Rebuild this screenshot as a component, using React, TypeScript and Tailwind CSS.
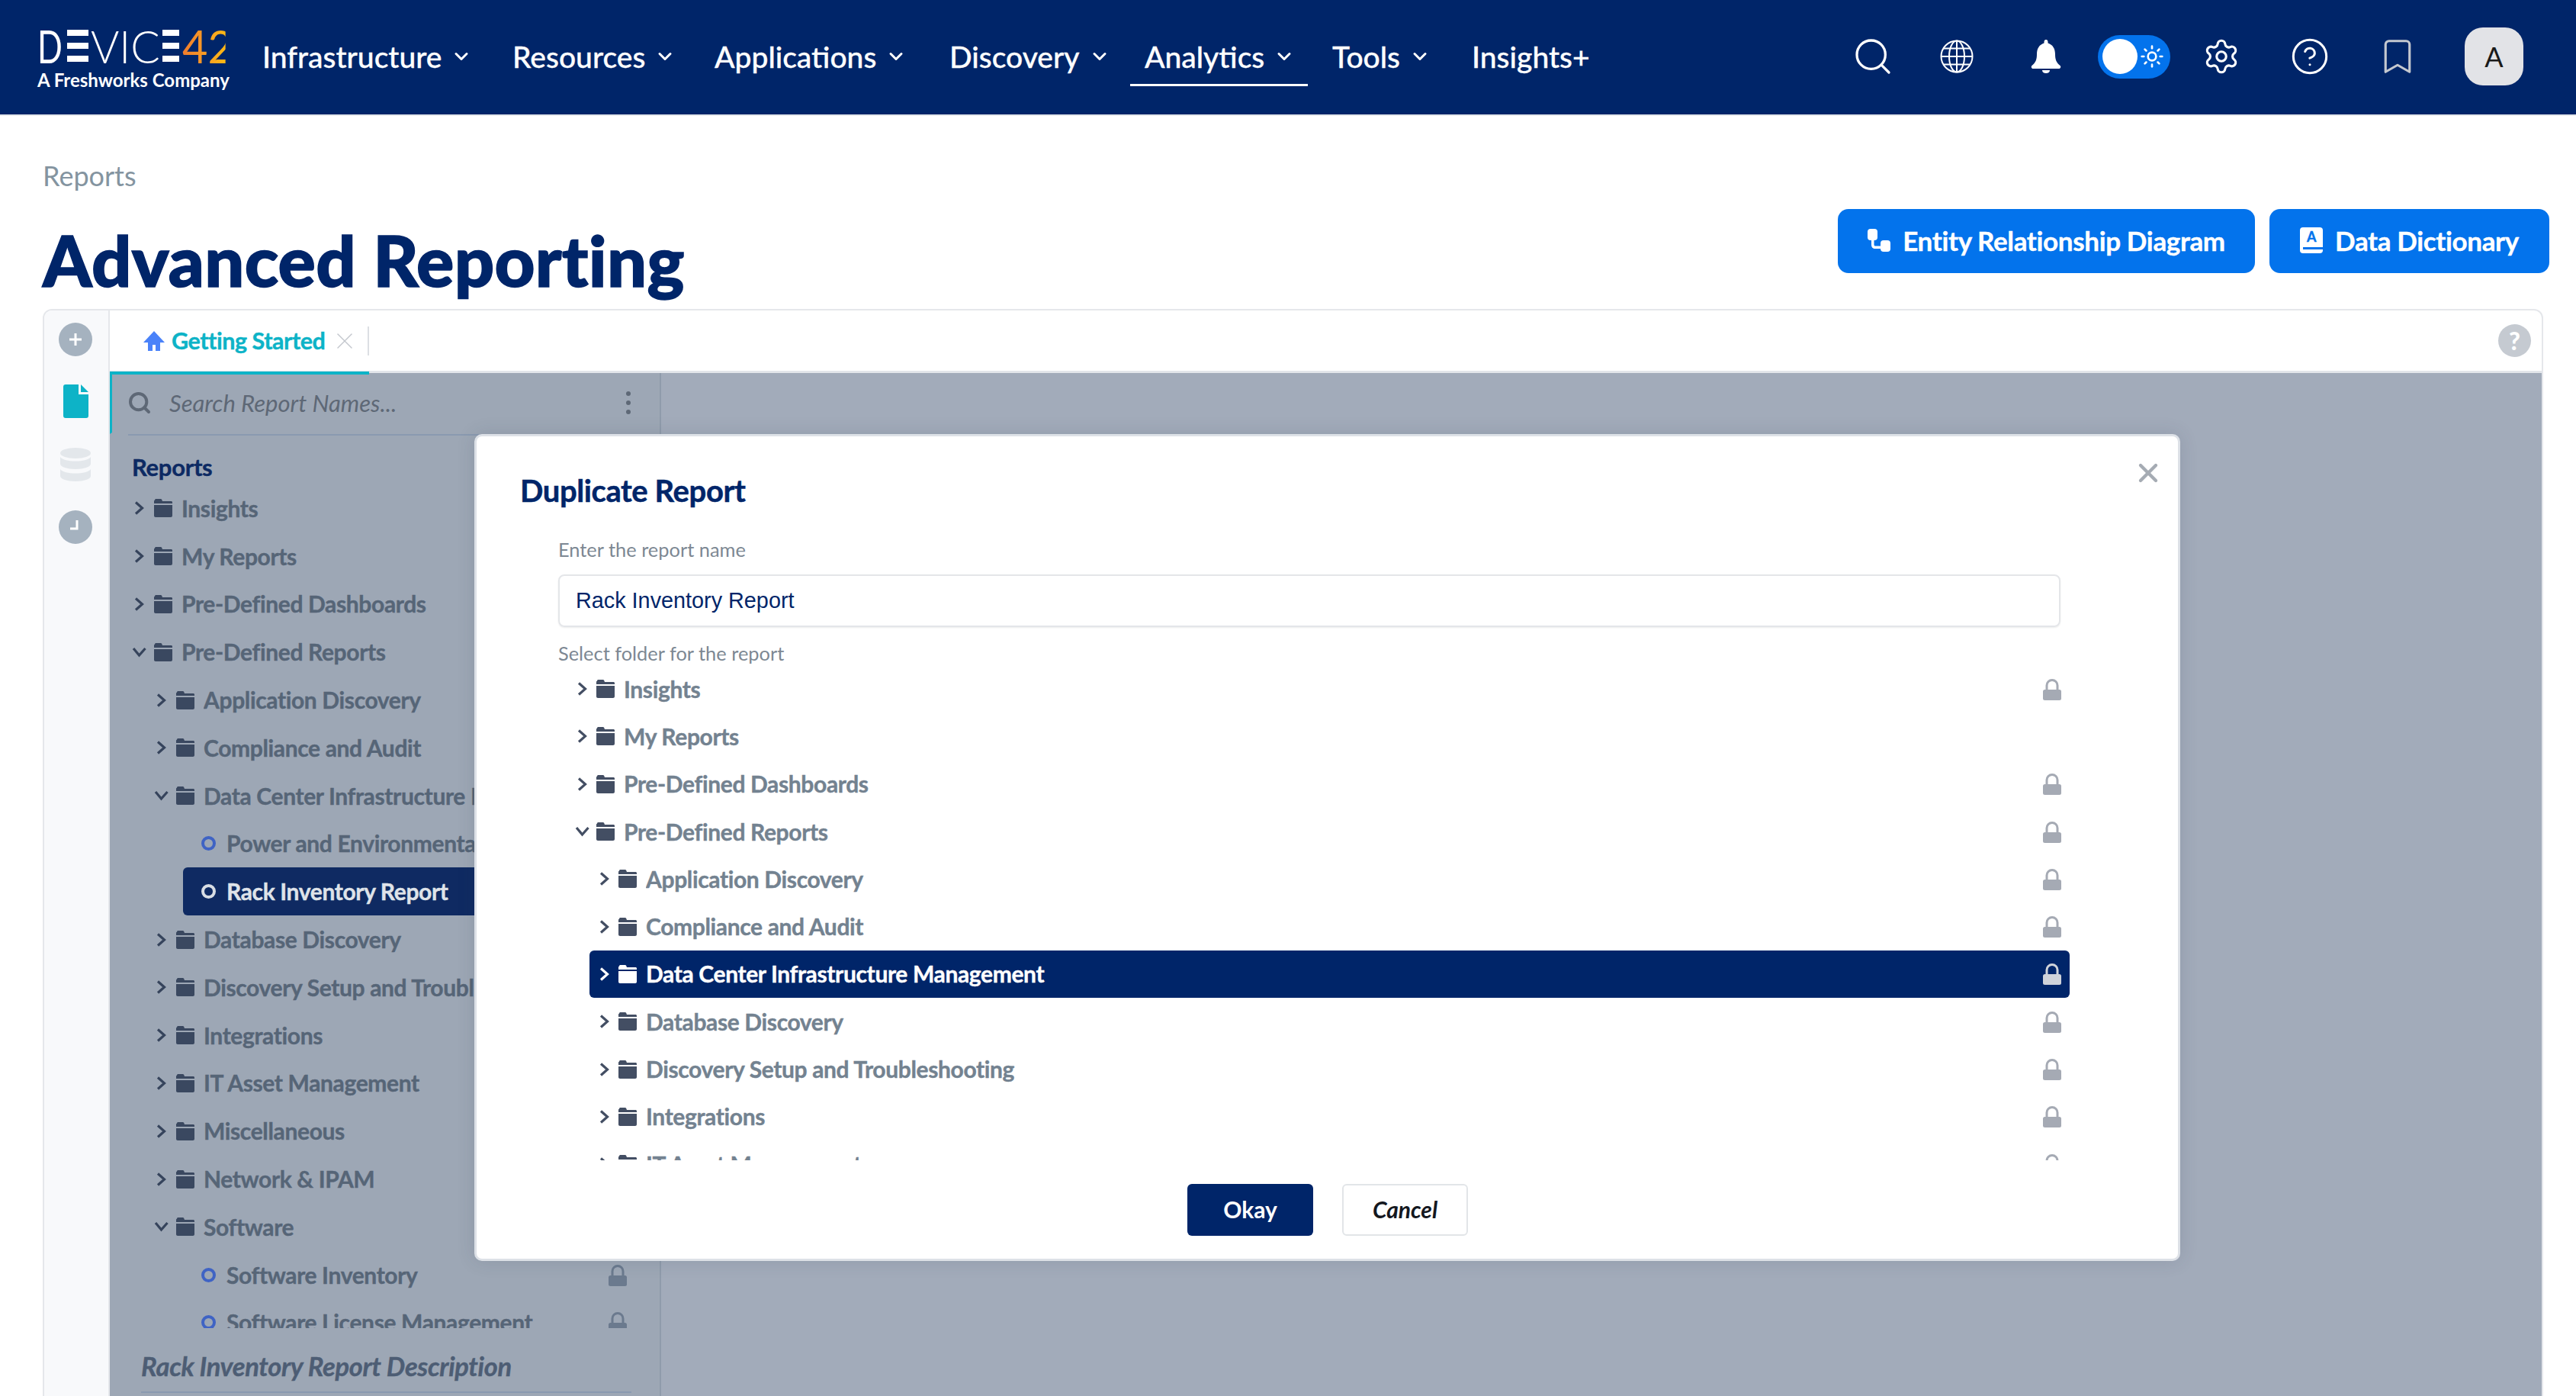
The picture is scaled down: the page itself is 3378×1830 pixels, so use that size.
import { Bookmark, ChevronDown, CircleHelp, Search, Settings, Sun, X } from "lucide-react";

interface TreeRow {
  label: string;
  level: 0 | 1 | 2;
  kind: "closed" | "open" | "leaf";
  locked?: boolean;
  active?: boolean;
}

const navItems = [
  { label: "Infrastructure", width: "w-[328px]", chevron: true },
  { label: "Resources", width: "w-[265px]", chevron: true },
  { label: "Applications", width: "w-[308px]", chevron: true },
  { label: "Discovery", width: "w-[256px]", chevron: true },
  { label: "Analytics", width: "w-[246px]", chevron: true, active: true },
  { label: "Tools", width: "w-[183px]", chevron: true },
  { label: "Insights+", width: "w-[200px]", chevron: false },
];

const sideRows: TreeRow[] = [
  { label: "Insights", level: 0, kind: "closed" },
  { label: "My Reports", level: 0, kind: "closed" },
  { label: "Pre-Defined Dashboards", level: 0, kind: "closed" },
  { label: "Pre-Defined Reports", level: 0, kind: "open" },
  { label: "Application Discovery", level: 1, kind: "closed" },
  { label: "Compliance and Audit", level: 1, kind: "closed" },
  { label: "Data Center Infrastructure Management", level: 1, kind: "open" },
  { label: "Power and Environmental", level: 2, kind: "leaf" },
  { label: "Rack Inventory Report", level: 2, kind: "leaf", active: true },
  { label: "Database Discovery", level: 1, kind: "closed" },
  { label: "Discovery Setup and Troubleshooting", level: 1, kind: "closed" },
  { label: "Integrations", level: 1, kind: "closed" },
  { label: "IT Asset Management", level: 1, kind: "closed" },
  { label: "Miscellaneous", level: 1, kind: "closed" },
  { label: "Network & IPAM", level: 1, kind: "closed" },
  { label: "Software", level: 1, kind: "open" },
  { label: "Software Inventory", level: 2, kind: "leaf", locked: true },
  { label: "Software License Management", level: 2, kind: "leaf", locked: true },
];

const folderRows: TreeRow[] = [
  { label: "Insights", level: 0, kind: "closed", locked: true },
  { label: "My Reports", level: 0, kind: "closed" },
  { label: "Pre-Defined Dashboards", level: 0, kind: "closed", locked: true },
  { label: "Pre-Defined Reports", level: 0, kind: "open", locked: true },
  { label: "Application Discovery", level: 1, kind: "closed", locked: true },
  { label: "Compliance and Audit", level: 1, kind: "closed", locked: true },
  { label: "Data Center Infrastructure Management", level: 1, kind: "closed", locked: true, active: true },
  { label: "Database Discovery", level: 1, kind: "closed", locked: true },
  { label: "Discovery Setup and Troubleshooting", level: 1, kind: "closed", locked: true },
  { label: "Integrations", level: 1, kind: "closed", locked: true },
  { label: "IT Asset Management", level: 1, kind: "closed", locked: true },
];

function Chevron({ open, color }: { open: boolean; color: string }) {
  return (
    <svg viewBox="0 0 13 20" className="h-[20px] w-[13px] shrink-0 overflow-visible" fill="none" stroke={color} strokeWidth="3.2">
      {open ? <path d="M-1 5 6.500 14 14.500 5" /> : <path d="M2 2.500 10.500 10 2 17.500" />}
    </svg>
  );
}

function Folder({ color }: { color: string }) {
  return (
    <svg viewBox="0 0 24 24" className="h-[24px] w-[24px] shrink-0" fill={color}>
      <path d="M1 1.500C1 .7 1.700 0 2.500 0h6.300c.6 0 1 .3 1.300.8L11 3h11.500c.8 0 1.500.7 1.500 1.500V6H0V2.500Z" />
      <path d="M0 8h24v14c0 1.100-.9 2-2 2H2c-1.100 0-2-.9-2-2V8Z" />
    </svg>
  );
}

function Lock({ color }: { color: string }) {
  return (
    <svg viewBox="0 0 24 29" className="h-[29px] w-[24px] shrink-0" fill="none">
      <path d="M5 16V9.500a7 7 0 0 1 14 0V16" stroke={color} strokeWidth="3" />
      <rect x="0" y="15" width="24" height="14" rx="2.500" fill={color} />
    </svg>
  );
}

function SideTreeRow({ row }: { row: TreeRow }) {
  const indent = row.kind === "leaf" ? "ml-[76px] pl-[24px]" : row.level === 1 ? "ml-[29px] pl-[12px]" : "pl-[12px]";
  return (
    <div className={`mr-[43px] flex h-[62.8px] items-center ${indent} ${row.active ? "rounded-[6px] bg-[#0f2a62]" : ""}`}>
      {row.kind === "leaf" ? (
        <span className={`mr-[14px] h-[19px] w-[19px] shrink-0 rounded-full border-[4.5px] ${row.active ? "border-[#d8dde4]" : "border-[#3f63c4]"}`} />
      ) : (
        <>
          <Chevron open={row.kind === "open"} color="#36445c" />
          <span className="ml-[13px] mr-[12px]">
            <Folder color="#3a4860" />
          </span>
        </>
      )}
      <span className={`flex-1 truncate text-[30px] font-bold tracking-[-0.012em] [-webkit-text-stroke:0.4px_currentColor] ${row.active ? "text-[#dfe3e9]" : "text-[#566577]"}`}>
        {row.label}
      </span>
      {row.locked ? <Lock color="#6b7a8e" /> : null}
    </div>
  );
}

function FolderTreeRow({ row }: { row: TreeRow }) {
  return (
    <div
      className={`flex h-[62.3px] items-center pl-[13px] pr-[11px] ${row.level === 1 ? "ml-[29px]" : ""} ${
        row.active ? "rounded-[6px] bg-[#002569] text-white" : "text-[#738290]"
      }`}
    >
      <Chevron open={row.kind === "open"} color={row.active ? "#ffffff" : "#434e63"} />
      <span className="ml-[12px] mr-[12px]">
        <Folder color={row.active ? "#ffffff" : "#434e63"} />
      </span>
      <span className="flex-1 truncate text-[30px] font-bold tracking-[-0.012em] [-webkit-text-stroke:0.4px_currentColor]">{row.label}</span>
      {row.locked ? <Lock color={row.active ? "#cfd3da" : "#a5aab4"} /> : null}
    </div>
  );
}

function LogoBars({ className }: { className: string }) {
  return (
    <span className={`flex h-[42px] flex-col justify-between ${className}`}>
      <span className="h-[8px] bg-white" />
      <span className="h-[8px] bg-white" />
      <span className="h-[8px] bg-white" />
    </span>
  );
}

function Logo() {
  return (
    <div className="mt-[6px] flex w-[344px] shrink-0 flex-col pl-[49px]">
      <div className="flex h-[46px] items-center text-[60px] font-normal leading-none text-white">
        <span className="w-[32px] origin-left scale-x-[0.72]">D</span>
        <LogoBars className="ml-[7px] w-[28px]" />
        <span className="ml-[3px] w-[91px] origin-left scale-x-[0.95] whitespace-nowrap font-light">VIC</span>
        <LogoBars className="ml-[3px] w-[22px]" />
        <span className="ml-[4px] w-[59px] origin-left scale-x-[0.96] bg-gradient-to-r from-[#ef7b2d] to-[#fdb813] bg-clip-text text-transparent">42</span>
      </div>
      <span className="mt-[10px] whitespace-nowrap text-[24px] font-bold leading-[24px] text-white">A Freshworks Company</span>
    </div>
  );
}

function Globe() {
  return (
    <svg viewBox="0 0 44 44" className="h-[44px] w-[44px]" fill="none" stroke="white" strokeWidth="2">
      <circle cx="22" cy="22" r="20.5" />
      <ellipse cx="22" cy="22" rx="10" ry="20.5" />
      <path d="M22 1.500v41M1.500 22h41M4.500 11.500h35M4.500 32.500h35" />
    </svg>
  );
}

function Bell() {
  return (
    <svg viewBox="0 0 40 44" className="h-[44px] w-[40px]" fill="white">
      <path d="M20 0c1.500 0 2.500 1.200 2.500 3v1.500C29 6.500 32 12 32 19c0 7 1.500 11 6.500 15 1.500 1.500.5 4-1.500 4H3c-2 0-3-2.500-1.500-4C6.500 30 8 26 8 19 8 12 11 6.500 17.500 4.500V3C17.500 1.200 18.500 0 20 0Z" />
      <path d="M15 40h10c0 2.500-2 4-5 4s-5-1.500-5-4Z" />
    </svg>
  );
}

function HomeIcon() {
  return (
    <svg viewBox="0 0 28 26" className="h-[26px] w-[28px] shrink-0" fill="#4a82f9">
      <path d="M14 0 28 15h-6v11h-6v-8h-4v8H6V15H0L14 0Z" />
    </svg>
  );
}

function RelationIcon() {
  return (
    <svg viewBox="0 0 30 30" className="h-[30px] w-[30px]" fill="white">
      <rect x="0" y="0" width="13" height="15" rx="4" />
      <rect x="17" y="15" width="13" height="15" rx="4" />
      <path d="M5 13h3.500v7.500c0 1.400.6 2 2 2H18V26h-8c-3 0-5-2-5-5V13Z" />
    </svg>
  );
}

function BookIcon() {
  return (
    <div className="relative flex h-[34px] w-[30px] shrink-0 justify-center rounded-[4px] bg-white text-[18px] font-bold leading-[24px] text-[#0373ec]">
      A
      <span className="absolute bottom-[5px] left-[4px] right-0 h-[3px] bg-[#0373ec]" />
    </div>
  );
}

function ActionButton({ label, icon, className }: { label: string; icon: React.ReactNode; className: string }) {
  return (
    <button
      type="button"
      className={`flex h-[84px] items-center justify-center gap-[16px] rounded-[14px] bg-[#0373ec] pb-[2px] text-[35px] font-bold tracking-[-0.01em] text-white [-webkit-text-stroke:0.4px_currentColor] ${className}`}
    >
      {icon}
      {label}
    </button>
  );
}

function Rail() {
  return (
    <div className="flex w-[86px] shrink-0 flex-col items-center border-r-2 border-[#e5e7eb] bg-[#f8f9fb] pr-[2px] pt-[16px]">
      <div className="flex h-[44px] w-[44px] items-center justify-center rounded-full bg-[#a5b2bf]">
        <svg viewBox="0 0 20 20" className="h-[20px] w-[20px]" stroke="white" strokeWidth="3">
          <path d="M10 2v16M2 10h16" />
        </svg>
      </div>
      <svg viewBox="0 0 33 44" className="mt-[37px] h-[44px] w-[33px]" fill="#0db3c7">
        <path d="M3 0h17v13h13v28a3 3 0 0 1-3 3H3a3 3 0 0 1-3-3V3a3 3 0 0 1 3-3Z" />
        <path d="M23 0l10 10H23V0Z" />
      </svg>
      <svg viewBox="0 0 40 44" className="mt-[39px] h-[44px] w-[40px]" fill="#e3e7eb">
        <ellipse cx="20" cy="7" rx="20" ry="7" />
        <path d="M0 12c3 4 11 5.500 20 5.500S37 16 40 12v9c0 4-9 7-20 7S0 25 0 21v-9Z" />
        <path d="M0 28c3 4 11 5.500 20 5.500S37 32 40 28v9c0 4-9 7-20 7S0 41 0 37v-9Z" />
      </svg>
      <div className="mt-[38px] flex h-[44px] w-[44px] items-center justify-center rounded-full bg-[#a5b2bf]">
        <svg viewBox="0 0 20 20" className="h-[20px] w-[20px]" fill="none" stroke="white" strokeWidth="3">
          <path d="M12 1v11H3" />
        </svg>
      </div>
    </div>
  );
}

function Modal() {
  return (
    <div className="absolute left-[622px] top-[569px] flex h-[1084px] w-[2237px] flex-col rounded-[10px] border-[3px] border-[#dde1e7] bg-white pl-[57px] shadow-[0_0_24px_rgba(40,55,80,0.14)]">
      <X className="absolute right-[19px] top-[28px] h-[40px] w-[40px] text-[#a5abb3]" strokeWidth={2.6} />
      <h2 className="mt-[47px] h-[48px] text-[40px] font-bold leading-[48px] tracking-[-0.01em] text-[#002569] [-webkit-text-stroke:0.5px_currentColor]">
        Duplicate Report
      </h2>
      <div className="ml-[50px] w-[1970px]">
        <p className="mt-[37px] h-[32px] text-[25.4px] leading-[32px] text-[#7d8893]">Enter the report name</p>
        <div className="mt-[17px] flex h-[69px] items-center rounded-[8px] border-2 border-[#e4e6e9] pl-[21px] font-['Liberation_Sans',sans-serif] text-[28.8px] text-[#002569] shadow-[0_1px_2px_rgba(0,0,0,0.08)]">
          Rack Inventory Report
        </div>
        <p className="mt-[18px] h-[32px] text-[25.4px] leading-[32px] text-[#7d8893]">Select folder for the report</p>
      </div>
      <div className="ml-[62px] h-[649px] w-[1970px] overflow-hidden">
        {folderRows.map((row) => (
          <FolderTreeRow key={row.label} row={row} />
        ))}
      </div>
      <div className="ml-[875px] mt-[31px] flex gap-[38px]">
        <button type="button" className="h-[68px] w-[165px] rounded-[6px] bg-[#002569] pb-[2px] text-[30px] font-bold text-white">
          Okay
        </button>
        <button type="button" className="h-[68px] w-[165px] rounded-[6px] border-2 border-[#e2e5e8] pb-[2px] text-[30px] font-bold italic text-[#14181f]">
          Cancel
        </button>
      </div>
    </div>
  );
}

export default function App() {
  return (
    <div className="relative h-[1830px] w-[3378px] overflow-hidden bg-white font-['Lato','Noto_Sans',sans-serif]">
      <header className="flex h-[152px] items-center border-b-2 border-[#e5e7eb] bg-[#002569] pb-[2px] text-white">
        <Logo />
        <nav className="flex items-center text-[39px] font-medium [-webkit-text-stroke:0.3px_currentColor]">
          {navItems.map((item) => (
            <div key={item.label} className={`relative flex h-[76px] items-center ${item.width}`}>
              <span>{item.label}</span>
              {item.chevron ? <ChevronDown className="ml-[12px] h-[28px] w-[28px]" strokeWidth={2.6} /> : null}
              {item.active ? <span className="absolute -left-[19px] bottom-[-1px] h-[3px] w-[233px] bg-white" /> : null}
            </div>
          ))}
        </nav>
        <div className="ml-auto flex items-center">
          <Search className="h-[56px] w-[56px]" strokeWidth={1.4} />
          <div className="ml-[60px]">
            <Globe />
          </div>
          <div className="ml-[75px]">
            <Bell />
          </div>
          <div className="ml-[48px] flex h-[57px] w-[95px] items-center rounded-full bg-[#0373ec] pl-[6px]">
            <span className="h-[46px] w-[46px] rounded-full bg-white" />
            <Sun className="ml-[3px] h-[32px] w-[32px]" strokeWidth={2} />
          </div>
          <Settings className="ml-[42px] h-[50px] w-[50px]" strokeWidth={1.5} />
          <CircleHelp className="ml-[65px] h-[52px] w-[52px]" strokeWidth={1.4} />
          <Bookmark className="ml-[62px] h-[54px] w-[54px] text-[#c4c8cf]" strokeWidth={1.4} />
          <div className="ml-[61px] mr-[69px] flex h-[76px] w-[77px] items-center justify-center rounded-[24px] bg-[#e2e3e7] text-[36px] font-normal text-[#1a1a1a]">
            A
          </div>
        </div>
      </header>

      <div className="pl-[56px] pr-[35px]">
        <div className="mt-[58px] h-[40px] text-[36px] leading-[40px] text-[#8494a0]">Reports</div>
        <div className="flex h-[155px] items-start justify-between">
          <h1 className="mt-[41px] text-[92px] font-black leading-[100px] tracking-[0.003em] text-[#002569] [-webkit-text-stroke:1.5px_currentColor]">
            Advanced Reporting
          </h1>
          <div className="mt-[24px] flex gap-[19px]">
            <ActionButton label="Entity Relationship Diagram" icon={<RelationIcon />} className="w-[547px]" />
            <ActionButton label="Data Dictionary" icon={<BookIcon />} className="w-[367px]" />
          </div>
        </div>
      </div>

      <section className="ml-[56px] mr-[43px] flex h-[1460px] overflow-hidden rounded-t-[12px] border-2 border-[#e5e7eb]">
        <Rail />
        <div className="flex min-w-0 flex-1 flex-col">
          <div className="flex h-[82px] shrink-0 items-center border-b-[3px] border-[#e2e5ea] pr-[14px]">
            <div className="relative flex h-[82px] w-[340px] items-center pl-[44px]">
              <HomeIcon />
              <span className="ml-[9px] text-[30.5px] font-bold tracking-[-0.015em] text-[#0db3c7] [-webkit-text-stroke:0.4px_currentColor]">Getting Started</span>
              <X className="ml-[8px] h-[36px] w-[36px] text-[#c3c7cd]" strokeWidth={1} />
              <span className="absolute right-0 top-[22px] h-[38px] w-[2px] bg-[#dcdfe4]" />
              <span className="absolute bottom-[-3px] left-0 right-0 h-[4px] bg-[#0db3c7]" />
            </div>
            <div className="ml-auto flex h-[43px] w-[43px] items-center justify-center rounded-full bg-[#c5cad1] text-[32px] font-black leading-none text-white">
              ?
            </div>
          </div>
          <div className="flex min-h-0 flex-1 bg-[#a2abba]">
            <div className="w-[723px] shrink-0 border-r-2 border-[#8f9bab] bg-[#9da7b5]">
              <div className="flex h-[80px] items-center border-b-2 border-l-[3px] border-b-transparent border-l-[#0db3c7] pl-[20px] pr-[38px]">
                <Search className="h-[32px] w-[32px] text-[#5e6876]" strokeWidth={3} />
                <span className="ml-[23px] flex-1 text-[31px] italic text-[#5e6876]">Search Report Names...</span>
                <span className="flex flex-col gap-[6px]">
                  <span className="h-[6px] w-[6px] rounded-full bg-[#5e6876]" />
                  <span className="h-[6px] w-[6px] rounded-full bg-[#5e6876]" />
                  <span className="h-[6px] w-[6px] rounded-full bg-[#5e6876]" />
                </span>
              </div>
              <div className="ml-[24px] h-[2px] bg-[#8a9ab0]" />
              <div className="ml-[29px] mt-[18px] h-[46px] text-[31px] font-bold leading-[46px] tracking-[-0.01em] text-[#0d2a63] [-webkit-text-stroke:0.4px_currentColor]">
                Reports
              </div>
              <div className="ml-[20px] h-[1106px] overflow-hidden">
                {sideRows.map((row) => (
                  <SideTreeRow key={row.label} row={row} />
                ))}
              </div>
              <div className="ml-[41px] mt-[30px] text-[34.5px] font-bold italic leading-[40px] tracking-[-0.01em] text-[#4d5d74] [-webkit-text-stroke:0.4px_currentColor]">
                Rack Inventory Report Description
              </div>
              <div className="ml-[41px] mr-[37px] mt-[13px] h-[2px] bg-[#8a9ab0]" />
            </div>
          </div>
        </div>
      </section>

      <Modal />
    </div>
  );
}
